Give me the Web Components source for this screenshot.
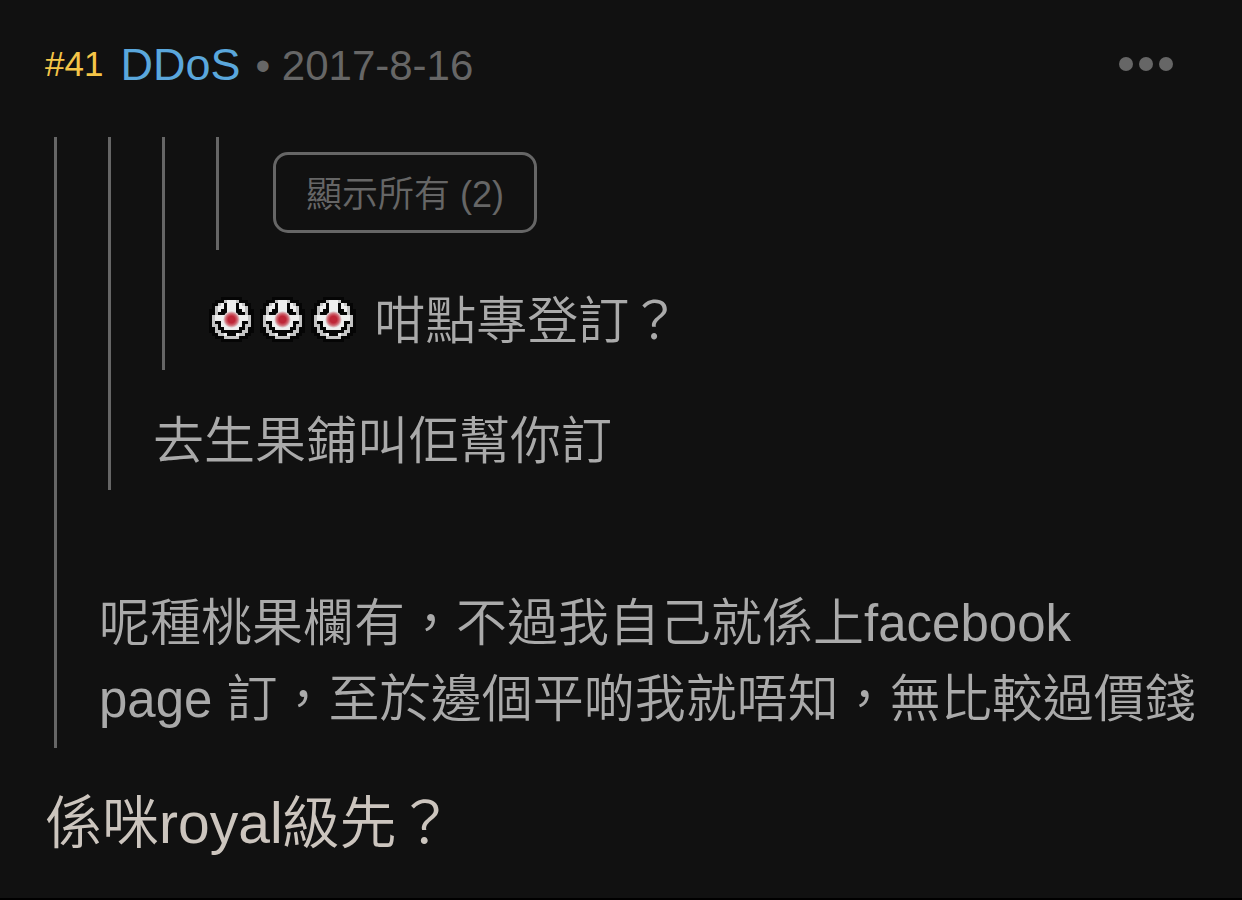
<!DOCTYPE html>
<html lang="zh-HK">
<head>
<meta charset="utf-8">
<meta name="viewport" content="width=device-width, initial-scale=1">
<title>DDoS #41</title>
<style>
  body {
    margin: 0;
    background: #000;
    color: #ccc5be;
    font-family: "Liberation Sans", "Noto Sans CJK TC", sans-serif;
  }
</style>
</head>
<body>
<forum-post number="41" author="DDoS" date="2017-8-16">
  <quote-block>
    <quote-block>
      <quote-block>
        <quote-block>
          <show-all count="2"></show-all>
        </quote-block>
        <post-text><clown-icon></clown-icon><clown-icon></clown-icon><clown-icon></clown-icon> 咁點專登訂？</post-text>
      </quote-block>
      <post-text>去生果鋪叫佢幫你訂</post-text>
    </quote-block>
    <post-text spaced>呢種桃果欄有，不過我自己就係上facebook<br>page 訂，至於邊個平啲我就唔知，無比較過價錢</post-text>
  </quote-block>
  <post-text large>係咪royal級先？</post-text>
</forum-post>

<script>
class ForumPost extends HTMLElement {
  constructor() {
    super();
    this.attachShadow({ mode: 'open' });
  }

  connectedCallback() {
    this.render();
  }

  render() {
    const author = this.getAttribute('author');
    const date = this.getAttribute('date');
    this.shadowRoot.innerHTML = `
      <style>
        :host {
          display: block;
          background: #111;
          padding: 24px 40px 32px 45px;
        }
        header {
          display: flex;
          align-items: center;
          height: 80px;
          margin-bottom: 33px;
          color: #666;
        }
        .number {
          font-size: 35px;
          color: #f5c548;
          margin-right: 17px;
        }
        .meta {
          display: flex;
          align-items: baseline;
          gap: 15px;
          flex: 1;
          padding-top: 2px;
          font-size: 42px;
        }
        a {
          font-size: 45px;
          color: #5aa7dc;
          text-decoration: none;
        }
        button {
          display: flex;
          gap: 6px;
          padding: 24px 29px;
          border: 0;
          background: none;
          color: inherit;
          cursor: pointer;
        }
        i {
          width: 14px;
          height: 14px;
          border-radius: 50%;
          background: currentColor;
        }
      </style>
      <article>
        <header>
          <span class="number">#${this.getAttribute('number')}</span>
          <div class="meta">
            <a href="#${author}">${author}</a>
            <time datetime="2017-08-16">• ${date}</time>
          </div>
          <button type="button" aria-label="更多"><i></i><i></i><i></i></button>
        </header>
        <slot></slot>
      </article>
    `;
  }
}

class QuoteBlock extends HTMLElement {
  constructor() {
    super();
    this.attachShadow({ mode: 'open' });
    this.shadowRoot.innerHTML = `
      <style>
        :host {
          display: block;
          margin-left: 9px;
          padding: 0 0 10px 42px;
          border-left: 3px solid #666;
          color: #aaa;
        }
      </style>
      <slot></slot>
    `;
  }
}

class PostText extends HTMLElement {
  constructor() {
    super();
    this.attachShadow({ mode: 'open' });
    this.shadowRoot.innerHTML = `
      <style>
        :host {
          display: block;
          margin-top: 34px;
          font-size: 51px;
          line-height: 76px;
          font-weight: 350;
        }
        :host([spaced]) {
          margin-top: 96px;
        }
        :host([large]) {
          margin-top: 32px;
          font-size: 57px;
          line-height: 86px;
        }
      </style>
      <slot></slot>
    `;
  }
}

class ShowAll extends HTMLElement {
  constructor() {
    super();
    this.attachShadow({ mode: 'open' });
  }

  connectedCallback() {
    this.shadowRoot.innerHTML = `
      <style>
        :host {
          display: flex;
          padding: 15px 12px 7px;
        }
        button {
          padding: 12px 30px 8px;
          border: 3px solid #666;
          border-radius: 15px;
          background: none;
          color: #666;
          font: 350 36px/55px "Liberation Sans", "Noto Sans CJK TC", sans-serif;
          cursor: pointer;
        }
      </style>
      <button type="button">顯示所有 (${this.getAttribute('count')})</button>
    `;
  }
}

// # is face, + is its shaded rim, o is black
const CLOWN = [
  '....ooooooo....',
  '..ooo+###+ooo..',
  '.oo+#o###o#+oo.',
  '.o+##o###o##+o.',
  'oo+#oo###oo#+oo',
  'oo+ooo###ooo+oo',
  'o+###########+o',
  'o+###########+o',
  'o+oo#######oo+o',
  'o++o#######o++o',
  'oo+oo#####oo+oo',
  'oo++ooooooo++oo',
  '.oo++#ooo#++oo.',
  '..ooo+++++ooo..',
  '....ooooooo....',
];

class ClownIcon extends HTMLElement {
  constructor() {
    super();
    this.attachShadow({ mode: 'open' });
    this.shadowRoot.innerHTML = `
      <style>
        :host {
          display: inline-block;
          padding: 0 4px 0 2px;
          line-height: 0;
          vertical-align: -3px;
        }
        svg {
          width: 45px;
          height: 45px;
        }
      </style>
      <svg viewBox="0 0 15 15" role="img" aria-label="小丑">
        <defs>
          <radialGradient id="nose">
            <stop offset=".4" stop-color="#be2637"/>
            <stop offset=".7" stop-color="#cf6b75"/>
            <stop offset="1" stop-color="#e8e8e8"/>
          </radialGradient>
        </defs>
        <g shape-rendering="crispEdges">${this.pixels()}</g>
        <circle cx="7.5" cy="7.5" r="2.8" fill="url(#nose)"/>
      </svg>
    `;
  }

  pixels() {
    const fills = { '#': '#eee', '+': '#c4c4c4', o: '#050505' };
    let out = '';
    CLOWN.forEach((row, y) => {
      [...row].forEach((cell, x) => {
        if (cell === '.') return;
        out += `<rect x="${x}" y="${y}" width="1" height="1" fill="${fills[cell]}"/>`;
      });
    });
    return out;
  }
}

customElements.define('forum-post', ForumPost);
customElements.define('quote-block', QuoteBlock);
customElements.define('post-text', PostText);
customElements.define('show-all', ShowAll);
customElements.define('clown-icon', ClownIcon);
</script>
</body>
</html>
